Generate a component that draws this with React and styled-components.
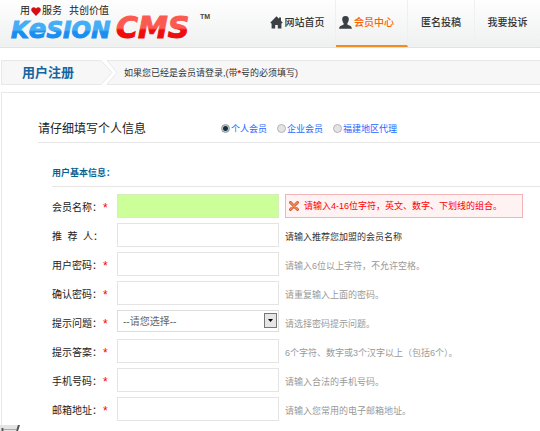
import React, { useState } from 'react';
import styled, { createGlobalStyle } from 'styled-components';

const navs = [
  { id: 1, label: '网站首页', icon: 'home' },
  { id: 2, label: '会员中心', icon: 'user', active: true },
  { id: 3, label: '匿名投稿' },
  { id: 4, label: '我要投诉' },
];

const memberTypes = ['个人会员', '企业会员', '福建地区代理'];

const fields = [
  {
    id: 'username',
    label: '会员名称：',
    required: true,
    error: '请输入4-16位字符，英文、数字、下划线的组合。',
  },
  { id: 'referrer', label: '推  荐  人：', hint: '请输入推荐您加盟的会员名称', dark: true },
  { id: 'password', label: '用户密码：', required: true, type: 'password', hint: '请输入6位以上字符，不允许空格。' },
  { id: 'confirm', label: '确认密码：', required: true, type: 'password', hint: '请重复输入上面的密码。' },
  { id: 'question', label: '提示问题：', required: true, select: true, hint: '请选择密码提示问题。' },
  { id: 'answer', label: '提示答案：', required: true, hint: '6个字符、数字或3个汉字以上（包括6个）。' },
  { id: 'mobile', label: '手机号码：', required: true, hint: '请输入合法的手机号码。' },
  { id: 'email', label: '邮箱地址：', required: true, hint: '请输入您常用的电子邮箱地址。' },
];

function LogoMark() {
  return (
    <LogoSvg width="206" height="28" viewBox="0 0 206 28" role="img" aria-label="KesionCMS">
      <defs>
        <linearGradient id="blue" gradientUnits="userSpaceOnUse" x1="0" y1="4" x2="0" y2="22">
          <stop offset="0.5" stopColor="#45adf5" />
          <stop offset="0.6" stopColor="#1a8df0" />
        </linearGradient>
        <linearGradient id="red" gradientUnits="userSpaceOnUse" x1="0" y1="0" x2="0" y2="22">
          <stop offset="0.5" stopColor="#fb5a50" />
          <stop offset="0.6" stopColor="#ee0c0c" />
        </linearGradient>
      </defs>
      <LogoText x="3" y="21" fontSize="23" fill="url(#blue)" stroke="url(#blue)">
        K<tspan fontSize="26">e</tspan>SION
      </LogoText>
      <LogoText x="108" y="21" fontSize="30" fill="url(#red)" stroke="url(#red)">
        CMS
      </LogoText>
      <TradeMark x="192" y="2">TM</TradeMark>
    </LogoSvg>
  );
}

function HomeIcon() {
  return (
    <svg width="13" height="13" viewBox="0 0 13 13" fill="#3b4045" aria-hidden="true">
      <path d="M6.5 0.3 L0.2 6.8 L1.6 7.6 V12.5 H5.2 V9 H7.8 V12.5 H11.4 V7.6 L12.8 6.8 L11 4.8 V1.6 H9 V2.8 Z" />
    </svg>
  );
}

function UserIcon() {
  return (
    <svg width="13" height="13" viewBox="0 0 13 13" fill="#3b4045" aria-hidden="true">
      <path d="M6.5 0 C9 0 10 1.5 9.8 3.6 C9.7 5.5 8.9 6.7 8.3 7.4 V8.6 C9.8 9.6 12.9 9.8 12.9 12.8 H0.1 C0.1 9.8 3.2 9.6 4.7 8.6 V7.4 C4.1 6.7 3.3 5.5 3.2 3.6 C3 1.5 4 0 6.5 0 Z" />
    </svg>
  );
}

function ErrorIcon() {
  return (
    <svg width="10" height="10" viewBox="0 0 10 10" aria-hidden="true">
      <path d="M1.5 1.5 L8.5 8.5 M8.5 1.5 L1.5 8.5" stroke="#d0603a" strokeWidth="3" strokeLinecap="round" />
      <path d="M1.6 1.5 L8.3 8.3 M8.3 1.6 L1.6 8.3" stroke="#f08a50" strokeWidth="1.4" strokeLinecap="round" />
    </svg>
  );
}

function Field({ field }) {
  return (
    <Row>
      <Label htmlFor={field.id}>
        {field.label}
        {field.required && <Required>*</Required>}
      </Label>
      {field.select ? (
        <SelectBox>
          <Select id={field.id}>
            <option>--请您选择--</option>
          </Select>
          <SelectArrow width="13" height="15" viewBox="0 0 13 15" aria-hidden="true">
            <rect x="0.5" y="0.5" width="12" height="14" fill="#e6e6e6" stroke="#777" />
            <path d="M4 6 H9 L6.5 9 Z" fill="#000" />
          </SelectArrow>
        </SelectBox>
      ) : (
        <Input id={field.id} type={field.type || 'text'} $invalid={!!field.error} />
      )}
      {field.error ? (
        <ErrorTip role="alert">
          <ErrorIcon />
          {field.error}
        </ErrorTip>
      ) : (
        <Hint $dark={field.dark}>{field.hint}</Hint>
      )}
    </Row>
  );
}

const App = () => {
  const [type, setType] = useState(memberTypes[0]);

  return (
    <Page>
      <GlobalStyle />
      <Header>
        <Brand>
          <Slogan>
            用
            <svg width="10" height="9" viewBox="0 0 10 9" aria-hidden="true">
              <path d="M5 9 L0.8 4.6 C-0.8 2.4 1 0 3 0.2 C4 0.3 4.7 0.9 5 1.6 C5.3 0.9 6 0.3 7 0.2 C9 0 10.8 2.4 9.2 4.6 Z" fill="#d80f12" />
            </svg>
            服务 <span>共创价值</span>
          </Slogan>
          <LogoMark />
        </Brand>
        <Nav>
          {navs.map(nav => (
            <NavLink key={nav.id} href="#" $active={nav.active} $icon={nav.icon}>
              {nav.icon === 'home' && <HomeIcon />}
              {nav.icon === 'user' && <UserIcon />}
              {nav.label}
            </NavLink>
          ))}
        </Nav>
      </Header>

      <StepBar>
        <StepTitle>用户注册</StepTitle>
        <svg width="24" height="25" viewBox="0 0 24 25" aria-hidden="true">
          <path d="M0 0 H4 L15 12.5 L4 25 H0 Z" fill="#f7f7f7" />
          <path d="M10 0 H24 V25 H10 L20 12.5 Z" fill="#f7f7f7" />
          <path d="M0 0.5 H4 L15 12.5 L4 24.5 H0 M24 0.5 H10 L20 12.5 L10 24.5 H24" fill="none" stroke="#e8e8e8" />
        </svg>
        <StepText>
          如果您已经是会员请登录,(带<b>*</b>号的必须填写)
        </StepText>
      </StepBar>

      <Panel>
        <PanelHead>
          <PanelTitle>请仔细填写个人信息</PanelTitle>
          <RadioGroup>
            {memberTypes.map(item => (
              <RadioLabel key={item}>
                <Radio name="type" checked={type === item} onChange={() => setType(item)} />
                {item}
              </RadioLabel>
            ))}
          </RadioGroup>
        </PanelHead>
        <Section>
          <SectionTitle>用户基本信息：</SectionTitle>
          {fields.map(field => (
            <Field key={field.id} field={field} />
          ))}
        </Section>
      </Panel>
      <Corner width="20" height="6" viewBox="0 0 20 6" aria-hidden="true">
        <path d="M0 0 H20 L18 6 H0 Z" fill="#e4e4e4" />
        <path d="M2.5 3 V6 M17 6 L19 0" fill="none" stroke="#555" strokeWidth="2" />
        <path d="M4 4.5 H16" stroke="#aaa" />
      </Corner>
    </Page>
  );
};

const GlobalStyle = createGlobalStyle`
  * {
    box-sizing: border-box;
  }
  html {
    overflow: hidden;
  }
  body {
    margin: 0;
    background: #fff;
    color: #333;
    font: 9px/12px 'Liberation Sans', 'Noto Sans CJK SC', sans-serif;
  }
`;

const Page = styled.div`
  width: 100%;
`;

const Header = styled.header`
  display: flex;
  justify-content: space-between;
  height: 48px;
  background: linear-gradient(#fefefe, #eff0f0);
  border-bottom: 1px solid #e2e2e2;
`;

const Brand = styled.div`
  padding: 5px 0 0 8px;
`;

const Slogan = styled.div`
  display: flex;
  align-items: center;
  gap: 1px;
  height: 12px;
  padding-left: 12px;
  color: #222;
  font-size: 10px;

  span {
    margin-left: 6px;
  }
`;

const LogoSvg = styled.svg`
  display: block;
  overflow: visible;
`;

const LogoText = styled.text`
  font-family: 'DejaVu Sans', sans-serif;
  font-weight: bold;
  font-style: italic;
`;

const TradeMark = styled.text`
  font: bold 7px 'Liberation Sans', sans-serif;
  fill: #444;
`;

const Nav = styled.nav`
  display: flex;
`;

const NavLink = styled.a`
  display: flex;
  align-items: center;
  justify-content: center;
  gap: 2px;
  width: ${props => (props.$active ? '72px' : '67px')};
  height: 47px;
  padding-right: ${props => (props.$icon ? '10px' : '0')};
  padding-bottom: ${props => (props.$active ? '0' : '2px')};
  border-right: 1px solid #f0f0f0;
  border-bottom: ${props => (props.$active ? '2px solid #f58a1f' : '0')};
  color: ${props => (props.$active ? '#ff6000' : '#333')};
  font-size: 10px;
  font-weight: 500;
  text-decoration: none;
  white-space: nowrap;

  &:last-child {
    width: 65px;
    border-right: 0;
  }
`;

const StepBar = styled.div`
  display: flex;
  height: 25px;
  margin: 12px 0 7px 1px;
`;

const StepTitle = styled.h1`
  display: flex;
  align-items: center;
  width: 96px;
  margin: 0;
  padding-left: 20px;
  background: #f7f7f7;
  border: 1px solid #e8e8e8;
  border-right: 0;
  color: #14659f;
  font-size: 13px;
  font-weight: bold;
`;

const StepText = styled.p`
  display: flex;
  flex: 1;
  align-items: center;
  margin: 0;
  padding-left: 3px;
  background: #f7f7f7;
  border: 1px solid #e8e8e8;
  border-width: 1px 0;

  b {
    color: #f00;
  }
`;

const Panel = styled.main`
  margin-left: 1px;
  padding: 22px 0 10px 36px;
  border: 1px solid #e8e8e8;
  border-width: 1px 0 0 1px;
`;

const PanelHead = styled.div`
  display: flex;
  align-items: center;
  height: 28px;
  border-bottom: 1px solid #e6e6e6;
`;

const PanelTitle = styled.h2`
  width: 183px;
  margin: 0;
  color: #222;
  font-size: 12px;
  font-weight: normal;
`;

const RadioGroup = styled.div`
  display: flex;
  gap: 10px;
`;

const RadioLabel = styled.label`
  display: flex;
  align-items: center;
  gap: 1px;
  color: #1a66ff;
`;

const Radio = styled.input.attrs({ type: 'radio' })`
  appearance: none;
  width: 9px;
  height: 9px;
  margin: 0;
  border: 1px solid #b4b4b4;
  border-radius: 50%;
  background: #e4e4e4;

  &:checked {
    border-color: #999;
    background: radial-gradient(#12303f 40%, #b9c6cd 60%);
  }
`;

const Section = styled.section`
  padding: 15px 0 0 14px;
`;

const SectionTitle = styled.h3`
  height: 29px;
  margin: 0 0 7px;
  padding-top: 9px;
  border-bottom: 1px solid #e6e6e6;
  color: #0b5f92;
  font-size: 9px;
  font-weight: bold;
`;

const Row = styled.div`
  display: flex;
  align-items: center;
  height: 24px;
  margin-bottom: 5px;
`;

const Label = styled.label`
  display: flex;
  align-items: center;
  gap: 1px;
  width: 65px;
  padding-top: 4px;
  color: #222;
  font-size: 10px;
  white-space: pre;
`;

const Required = styled.span`
  color: #f00;
  font-size: 12px;
`;

const Input = styled.input`
  width: 162px;
  height: 24px;
  padding: 0 5px;
  background: ${props => (props.$invalid ? '#ccff99' : '#fff')};
  border: 1px solid ${props => (props.$invalid ? '#d3eebb' : '#e4e4e4')};
  font: inherit;
`;

const SelectBox = styled.div`
  position: relative;
  align-self: flex-start;
  width: 162px;
`;

const Select = styled.select`
  appearance: none;
  display: block;
  width: 100%;
  height: 22px;
  padding: 0 5px;
  background: #fff;
  border: 1px solid #ddd;
  border-radius: 0;
  color: #666;
  font-family: inherit;
  font-size: 10px;
`;

const SelectArrow = styled.svg`
  position: absolute;
  top: 3px;
  right: 2px;
  pointer-events: none;
`;

const Hint = styled.span`
  padding: 4px 0 0 6px;
  color: ${props => (props.$dark ? '#333' : '#999')};
`;

const ErrorTip = styled.div`
  display: flex;
  align-items: center;
  gap: 5px;
  width: 238px;
  height: 24px;
  margin-left: 6px;
  padding-left: 3px;
  background: #fff2f2;
  border: 1px solid #f3b4b8;
  color: #f00;
`;

const Corner = styled.svg`
  position: fixed;
  bottom: 0;
  left: 0;
`;

export default App;
